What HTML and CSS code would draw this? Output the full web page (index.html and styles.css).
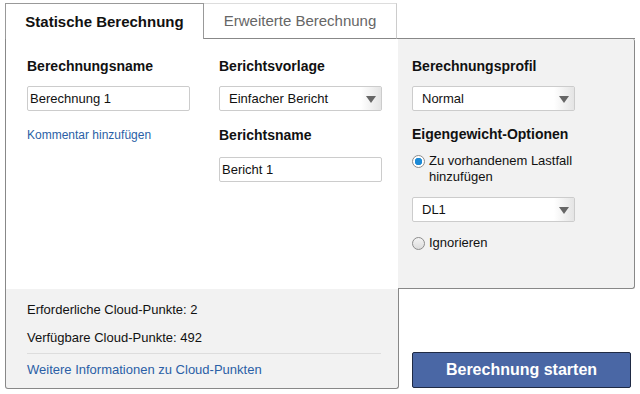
FILE: index.html
```html
<!DOCTYPE html>
<html lang="de">
<head>
  <meta charset="UTF-8">
  <meta name="viewport" content="width=device-width, initial-scale=1.0">
  <title>Berechnung</title>
  <link rel="stylesheet" href="styles.css">
</head>
<body>

  <div class="calc">
    <div class="tabs">
      <div class="tab active">Statische Berechnung</div>
      <div class="tab">Erweiterte Berechnung</div>
      <div class="tab-fill"></div>
    </div>

    <div class="panel">
      <div class="main">
        <div class="col">
          <div class="field-label">Berechnungsname</div>
          <input type="text" class="text-input" value="Berechnung 1">
          <a href="#" class="link comment">Kommentar hinzufügen</a>
        </div>
        <div class="col">
          <div class="field-label">Berichtsvorlage</div>
          <div class="select">Einfacher Bericht<span class="arrow"></span></div>
          <div class="field-label next">Berichtsname</div>
          <input type="text" class="text-input name-input" value="Bericht 1">
        </div>
      </div>

      <div class="options">
        <div class="field-label">Berechnungsprofil</div>
        <div class="select">Normal<span class="arrow"></span></div>
        <div class="field-label weight">Eigengewicht-Optionen</div>
        <div class="radio-row first">
          <span class="radio checked"></span>
          <span>Zu vorhandenem Lastfall<br>hinzufügen</span>
        </div>
        <div class="select loadcase">DL1<span class="arrow"></span></div>
        <div class="radio-row last">
          <span class="radio"></span>
          <span>Ignorieren</span>
        </div>
      </div>

      <div class="footer">
        <p class="points">Erforderliche Cloud-Punkte: 2</p>
        <p class="points second">Verfügbare Cloud-Punkte: 492</p>
        <div class="divider"></div>
        <a href="#" class="link more">Weitere Informationen zu Cloud-Punkten</a>
      </div>

      <div class="actions">
        <button class="start">Berechnung starten</button>
      </div>
    </div>
  </div>

</body>
</html>
```

FILE: styles.css
```css
body {
  margin: 0;
  padding: 3px 0 0 5px;
  font-family: "Liberation Sans", Arial, sans-serif;
  color: #111;
  background: #fff;
}
.calc {
  width: 630px;
}
.tabs {
  display: flex;
  height: 36px;
}
.tab {
  box-sizing: border-box;
  height: 36px;
  text-align: center;
  font-size: 15px;
  line-height: 34px;
  color: #666;
  width: 193px;
  border-top: 1px solid #ddd;
  border-right: 1px solid #ccc;
  border-bottom: 1px solid #888;
}
.tab.active {
  width: 199px;
  color: #111;
  font-weight: bold;
  line-height: 35px;
  border: 1px solid #999;
  border-bottom: none;
  background: #fff;
}
.tab-fill {
  flex: 1;
  border-bottom: 1px solid #888;
}
.panel {
  display: grid;
  grid-template-columns: 393px 237px;
  grid-template-rows: 250px 100px;
}
.main {
  display: flex;
  border-left: 1px solid #888;
  padding: 19px 0 0 21px;
  gap: 30px;
}
.col {
  width: 162px;
  display: flex;
  flex-direction: column;
  align-items: flex-start;
}
.field-label {
  font-size: 14px;
  font-weight: bold;
  line-height: 16px;
}
.field-label.next {
  margin-top: 16px;
}
.text-input {
  box-sizing: border-box;
  width: 163px;
  height: 25px;
  margin: 12px 0 0 0;
  padding: 0 2px;
  border: 1px solid #ccc;
  border-radius: 2px;
  font-family: inherit;
  font-size: 13px;
  color: #111;
  background: #fff;
  outline: none;
}
.name-input {
  margin-top: 14px;
}
.link {
  font-size: 12px;
  line-height: 14px;
  color: #2b5fa6;
  text-decoration: none;
}
.comment {
  margin-top: 17px;
}
.link.more {
  font-size: 13px;
  line-height: 16px;
}
.select {
  position: relative;
  box-sizing: border-box;
  width: 163px;
  height: 25px;
  margin-top: 12px;
  padding-left: 9px;
  border: 1px solid #ccc;
  border-radius: 2px;
  background: #fff;
  font-size: 13px;
  line-height: 23px;
}
.arrow {
  position: absolute;
  top: 0;
  right: 0;
  width: 20px;
  height: 23px;
  background: linear-gradient(to right, #fff, #e4e4e4);
}
.arrow::after {
  content: "";
  position: absolute;
  top: 9px;
  left: 5px;
  border-left: 5px solid transparent;
  border-right: 5px solid transparent;
  border-top: 7px solid #666;
}
.options {
  background: #f2f2f2;
  border-right: 1px solid #888;
  border-bottom: 1px solid #888;
  border-radius: 0 2px 3px 0;
  padding: 19px 0 0 14px;
}
.field-label.weight {
  margin-top: 15px;
}
.radio-row {
  display: flex;
  align-items: flex-start;
  gap: 4px;
  font-size: 13px;
  line-height: 16px;
}
.radio-row.first {
  margin-top: 11px;
}
.radio-row.last {
  margin-top: 13px;
}
.radio {
  box-sizing: border-box;
  flex: none;
  width: 13px;
  height: 13px;
  margin-top: 2px;
  border: 1px solid #8c8c8c;
  border-radius: 50%;
  background: linear-gradient(#f4f4f4, #dcdcdc);
}
.radio.checked {
  background: radial-gradient(circle, #1d8ad6 0 3.5px, #fff 4px);
}
.select.loadcase {
  margin-top: 12px;
}
.footer {
  background: #f2f2f2;
  border: 1px solid #888;
  border-top: none;
  border-radius: 0 0 3px 3px;
  margin-right: -1px;
  padding: 13px 17px 0 21px;
}
.points {
  margin: 0;
  font-size: 13px;
  line-height: 16px;
}
.points.second {
  margin-top: 12px;
}
.divider {
  height: 1px;
  background: #ddd;
  margin: 7px 0 6px;
}
.actions {
  display: flex;
  align-items: flex-end;
  padding: 0 0 1px 14px;
}
.start {
  width: 219px;
  height: 36px;
  border: 1px solid #1f2a44;
  border-radius: 2px;
  background: #4a67a5;
  color: #fff;
  font-family: inherit;
  font-size: 16px;
  font-weight: bold;
  cursor: pointer;
}
```
